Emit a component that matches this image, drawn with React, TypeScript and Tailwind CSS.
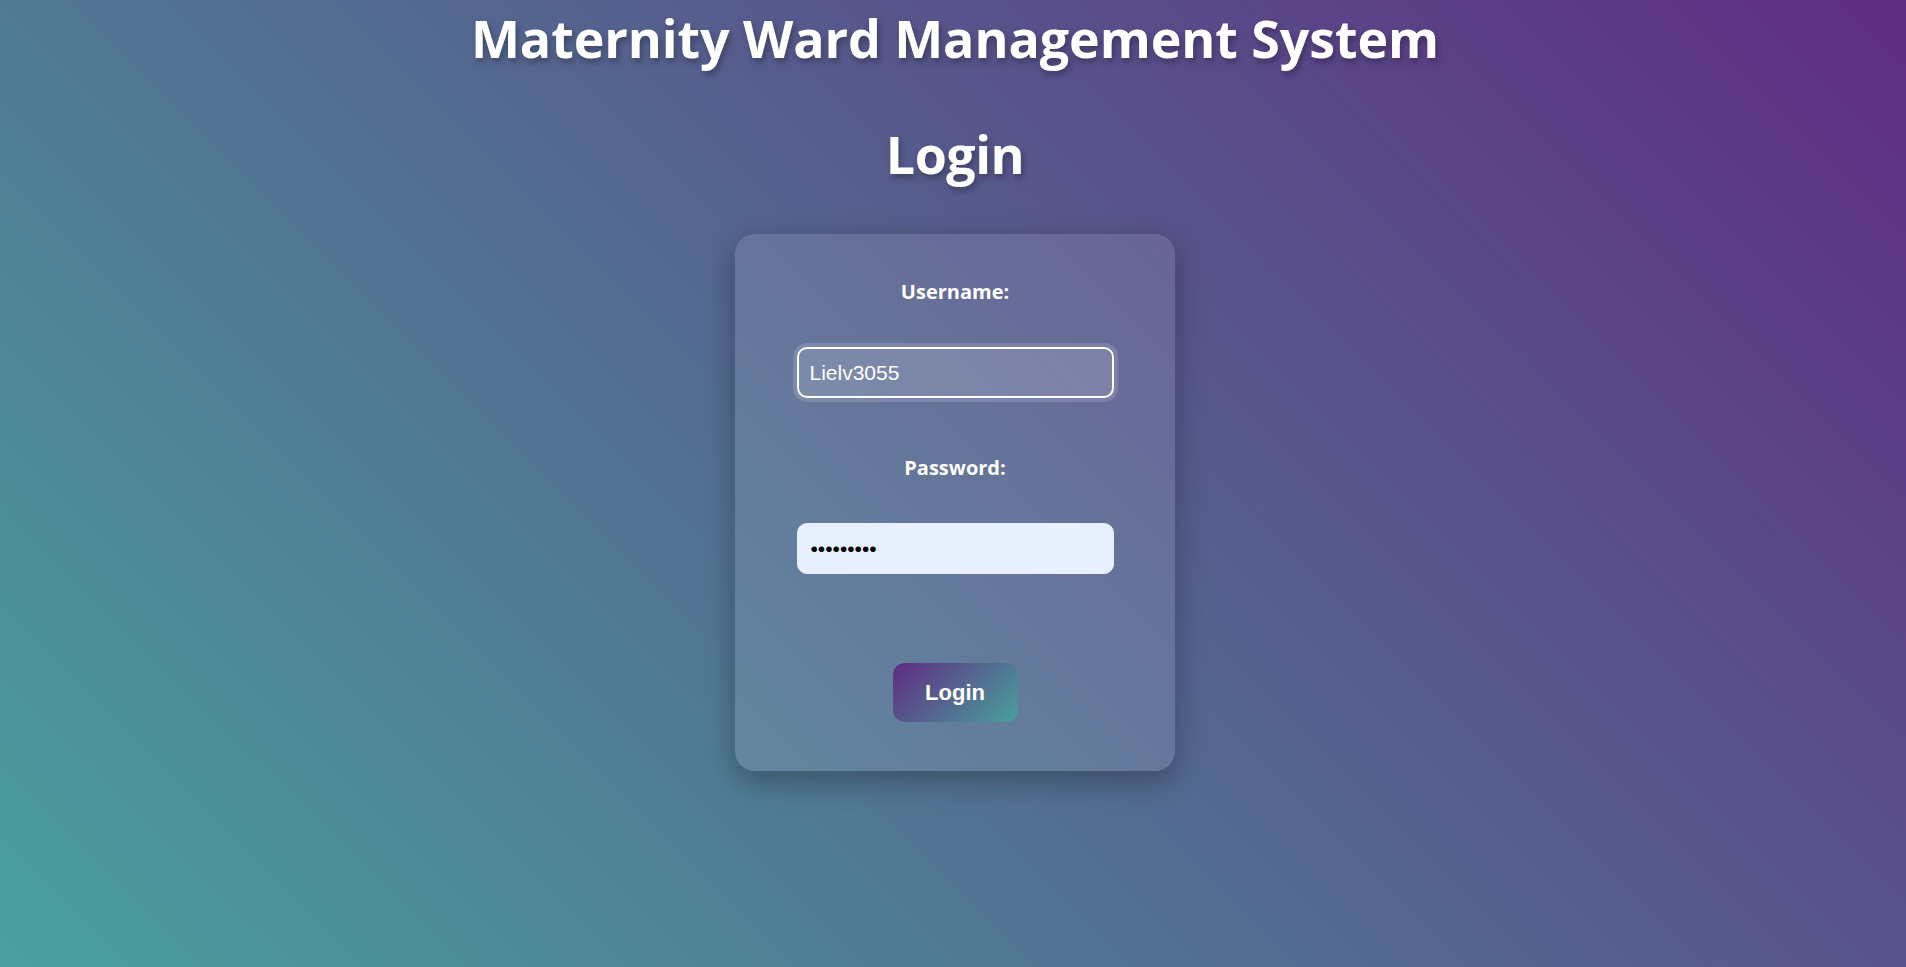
import { useState } from 'react';

export default function App() {
  const [username, setUsername] = useState('Lielv3055');
  const [password, setPassword] = useState('123456789');

  const headingFont = "font-['Segoe_UI','Open_Sans','Noto_Sans',sans-serif]";

  return (
    <div className="min-h-screen w-full pl-[4px] bg-[linear-gradient(45deg,#49a09d,#5f2c82)] flex flex-col items-center text-white">
      {/* Titles */}
      <h1
        className={`${headingFont} mt-[6px] text-[52px] leading-[64px] font-bold tracking-[-0.1px] [text-shadow:2px_4px_6px_rgba(0,0,0,0.3)]`}
      >
        Maternity Ward Management System
      </h1>
      <h2
        className={`${headingFont} mt-[52px] text-[52px] leading-[64px] font-bold tracking-[-0.5px] [text-shadow:2px_4px_6px_rgba(0,0,0,0.3)]`}
      >
        Login
      </h2>

      {/* Login card */}
      <form
        onSubmit={(e) => e.preventDefault()}
        className="mt-[48px] w-[440px] h-[537px] rounded-[20px] bg-white/10 shadow-[0_10px_30px_rgba(0,0,0,0.3)] flex flex-col items-center pt-[44px]"
      >
        <label className={`${headingFont} text-[20px] leading-[28px] font-bold`}>Username:</label>
        <input
          value={username}
          onChange={(e) => setUsername(e.target.value)}
          className="mt-[41px] w-[317px] h-[51px] rounded-[10px] border-2 border-white bg-white/15 px-[11px] text-[21px] text-white font-['Liberation_Sans',Arial,sans-serif] outline-none ring-4 ring-white/15"
        />

        <label className={`${headingFont} mt-[56px] text-[20px] leading-[28px] font-bold`}>Password:</label>
        <input
          type="password"
          value={password}
          onChange={(e) => setPassword(e.target.value)}
          className="mt-[41px] w-[317px] h-[51px] rounded-[10px] border border-[#e8f0fe] bg-[#e8f0fe] px-[13px] text-[21px] text-black font-['Liberation_Sans',Arial,sans-serif] outline-none"
        />

        <button
          type="submit"
          className="mt-[89px] w-[125px] h-[59px] rounded-[12px] bg-[linear-gradient(135deg,#5f2c82,#49a09d)] text-[22px] font-bold text-white font-['Liberation_Sans',Arial,sans-serif]"
        >
          Login
        </button>
      </form>
    </div>
  );
}
